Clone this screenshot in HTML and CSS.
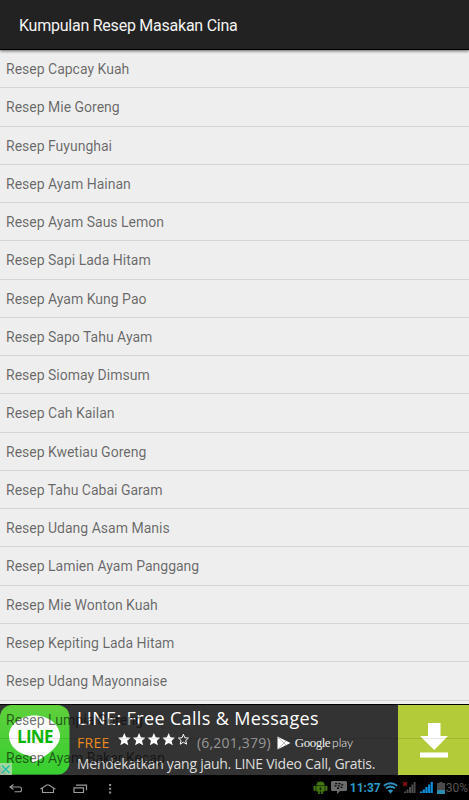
FILE: index.html
```html
<!DOCTYPE html>
<html lang="id">
<head>
  <meta charset="utf-8">
  <title>Kumpulan Resep Masakan Cina</title>
  <link rel="stylesheet" href="styles.css">
</head>
<body>

  <header class="action-bar">
    <h1>Kumpulan Resep Masakan Cina</h1>
  </header>

  <main class="content">
    <ul class="recipes">
      <li>Resep Capcay Kuah</li>
      <li>Resep Mie Goreng</li>
      <li>Resep Fuyunghai</li>
      <li>Resep Ayam Hainan</li>
      <li>Resep Ayam Saus Lemon</li>
      <li>Resep Sapi Lada Hitam</li>
      <li>Resep Ayam Kung Pao</li>
      <li>Resep Sapo Tahu Ayam</li>
      <li>Resep Siomay Dimsum</li>
      <li>Resep Cah Kailan</li>
      <li>Resep Kwetiau Goreng</li>
      <li>Resep Tahu Cabai Garam</li>
      <li>Resep Udang Asam Manis</li>
      <li>Resep Lamien Ayam Panggang</li>
      <li>Resep Mie Wonton Kuah</li>
      <li>Resep Kepiting Lada Hitam</li>
      <li>Resep Udang Mayonnaise</li>
      <li>Resep Lumpia Goreng</li>
      <li>Resep Ayam Bakar Kecap</li>
    </ul>

    <!-- the banner sits under the list, the rows show through on top of it -->
    <div class="ad">
      <div class="ad-icon">
        <svg width="70" height="70" viewBox="0 0 70 70">
          <defs>
            <linearGradient id="green" x1="0" y1="0" x2="0" y2="1">
              <stop offset="0" stop-color="#5fd03c"/>
              <stop offset="1" stop-color="#37cf31"/>
            </linearGradient>
          </defs>
          <rect width="69.500" height="69.500" rx="12" fill="url(#green)"/>
          <path d="M34.500 10.500C20.500 10.500 9 19.500 9 31c0 10 9 18.300 21.500 20 2 .4 1.500 2.500 1.200 5-.2 1.800.8 2.300 2.500 1.400C43 52.500 60 43 60 31c0-11.500-11.500-20.500-25.500-20.500z" fill="#fff"/>
        </svg>
        <span class="ad-logo">LINE</span>
        <svg class="ad-close" width="12" height="12" viewBox="0 0 12 12">
          <rect width="12" height="12" fill="#b9dcb5" fill-opacity=".8"/>
          <path d="M2 2.500l7.500 7.500M9.500 2.500L2 10" stroke="#20b8b0" stroke-width="1.300"/>
        </svg>
      </div>
      <div class="ad-text">
        <div class="ad-title">LINE: Free Calls &amp; Messages</div>
        <div class="ad-rating">
          <span class="free">FREE</span>
          <svg class="stars" width="72" height="14" viewBox="0 0 72 14">
            <defs>
              <path id="star" d="M6 0l1.800 4.300 4.500.4-3.400 3 1.100 4.600L6 9.900l-4 2.400 1.100-4.600-3.400-3 4.500-.4z"/>
            </defs>
            <g fill="#fff">
              <use href="#star" x=".3"/>
              <use href="#star" x="15.100"/>
              <use href="#star" x="29.900"/>
              <use href="#star" x="44.700"/>
            </g>
            <path transform="translate(59.400 0)" d="M6 1.300l1.400 3.500 3.600.3-2.700 2.400.9 3.700L6 9.200l-3.200 2 .9-3.700L1 5.100l3.600-.3z" fill="none" stroke="#fff" stroke-width="1"/>
          </svg>
          <span class="count">(6,201,379)</span>
          <svg class="play" width="14" height="14" viewBox="0 0 14 14">
            <path d="M.5.500L13.500 7 .5 13.500z" fill="#fff"/>
            <path d="M1 1l8.500 8.500M1 13l8.500-8.500" stroke="#999" stroke-width=".6"/>
          </svg>
          <span class="google">Google</span>
          <span class="play-word">play</span>
        </div>
        <div class="ad-desc">Mendekatkan yang jauh. LINE Video Call, Gratis.</div>
      </div>
      <div class="ad-download">
        <svg width="28" height="35" viewBox="0 0 28 35">
          <path d="M8 0h12.500v13H28L14.200 27 0 13h8z" fill="#fff"/>
          <rect y="29.500" width="28" height="5" fill="#fff"/>
        </svg>
      </div>
    </div>
  </main>

  <footer class="system-bar">
    <div class="nav">
      <svg width="14" height="10" viewBox="0 0 14 10">
        <path d="M4.500 0.500L1 3l3.500 2.500M1.500 3h9a2 2 0 0 1 2 2v.8a2 2 0 0 1-2 2H5.500" fill="none" stroke="#9a9a9a" stroke-width="1.100"/>
      </svg>
      <svg width="16" height="10" viewBox="0 0 16 10">
        <path d="M2.500 8.500V4.800H1L6.300 1.200q1.500-.8 3 0L14.800 4.800h-1.300v3.700z" fill="none" stroke="#9a9a9a" stroke-width="1.100"/>
      </svg>
      <svg width="15" height="10" viewBox="0 0 15 10">
        <path d="M1 3.800h9.500v4.700H1zM3 1.200h10.500v5" fill="none" stroke="#9a9a9a" stroke-width="1.200"/>
      </svg>
      <svg class="more" width="3" height="10" viewBox="0 0 3 10">
        <path d="M0 0h2.200v2H0zM0 3.700h2.200v2H0zM0 7.400h2.200v2H0z" fill="#8a8a8a"/>
      </svg>
    </div>
    <div class="status">
      <svg width="16" height="13" viewBox="0 0 16 13">
        <path d="M3.500 4.300a4 3.500 0 0 1 8 0zM3.500 5h8v5.200h-1.700V13H8.300v-2.500H6.700V13H5.200v-2.800H3.500zM.8 5h1.800v4.500H.8zM12.400 5h1.800v4.500h-1.800zM4.300.2l1.300 1.600M10.700.2L9.400 1.800" fill="#447613" stroke="#447613" stroke-width=".4"/>
        <path d="M8.200 5.200L6 8.200h1.500l-.8 2.300L9 7.500H7.600z" fill="#0c1605"/>
      </svg>
      <svg class="bbm" width="16" height="13" viewBox="0 0 16 13">
        <path d="M1.500 0h13Q16 0 16 1.500v7q0 1.500-1.500 1.500H9l-3 3v-3H1.500Q0 10 0 8.500v-7Q0 0 1.500 0z" fill="#6c6c6c"/>
        <path d="M4.200 2h2v1.300h-2zM7.500 2h2v1.300h-2zM3.500 4.300h2v1.300h-2zM6.800 4.300h2v1.300h-2zM10.200 3.300h2v1.300h-2zM6 6.600h2v1.300H6zM9.500 5.800h2v1.300h-2z" fill="#080808"/>
      </svg>
      <span class="clock">11:37</span>
      <svg class="wifi" width="15" height="12" viewBox="0 0 15 12">
        <path d="M.8 3.700q6.700-5 13.400 0M3 6.300q4.500-3.400 9 0" fill="none" stroke="#2c92bd" stroke-width="2"/>
        <path d="M4.800 8.500q2.700-2 5.400 0L7.500 11.500z" fill="#2c92bd"/>
      </svg>
      <svg class="signal" width="14" height="13" viewBox="0 0 14 13">
        <path d="M2 10.500h2V12H2zM4.500 8.500h2V12h-2zM7 6h2v6H7zM9.400 3.500h1.900V12H9.400zM11.700 1h1.800v11h-1.800z" fill="#4d4d4d"/>
        <path d="M1 1l4 4M5 1L1 5" stroke="#a01010" stroke-width="1.200"/>
      </svg>
      <svg class="signal" width="14" height="13" viewBox="0 0 14 13">
        <path d="M0 10.500h2.200V12H0zM2.700 8.500h2.200V12H2.700zM5.400 6h2.200v6H5.400zM8.100 3.500h2.100V12H8.100zM10.700 1h2.100v11h-2.100z" fill="#0a91dd"/>
      </svg>
      <svg class="battery" width="8" height="12" viewBox="0 0 8 12">
        <path d="M2.500 0h3v1H8v7H0V1h2.500z" fill="#4a4a4a"/>
        <path d="M0 8h8v4H0z" fill="#2d8ab0"/>
      </svg>
      <span class="percent">30%</span>
    </div>
  </footer>

</body>
</html>
```
FILE: styles.css
```css
html {height: 100%;}

body {
margin: 0;
padding: 0;
height: 800px;
display: flex;
flex-direction: column;
overflow: hidden;
background: #eee;
font-family: Roboto, sans-serif;
}

.action-bar {
height: 50px;
flex: none;
display: flex;
align-items: center;
padding: 2px 19px 0;
box-sizing: border-box;
background: #222;
border-bottom: 1px solid #000;
box-shadow: 0 1px 3px rgba(0,0,0,0.6);
z-index: 2;
}

.action-bar h1 {
margin: 0;
color: #f3f3f3;
font-size: 16px;
font-weight: normal;
letter-spacing: -0.24px;
white-space: nowrap;
}

.content {
position: relative;
flex: 1;
overflow: hidden;
}

.recipes {
position: relative;
z-index: 1;
list-style: none;
margin: 0;
padding: 0;
}

.recipes li {
height: 38.280px;
line-height: 39.500px;
padding-left: 6px;
box-sizing: border-box;
border-bottom: 1px solid rgba(0,0,0,0.1);
color: rgba(0,0,0,0.58);
font-size: 14px;
white-space: nowrap;
}

/* banner */
.ad {
position: absolute;
left: 0;
right: 0;
bottom: 0;
height: 70px;
display: flex;
background: #333;
box-shadow: 0 -1px 0 #000;
}

.ad-icon {
position: relative;
width: 70px;
flex: none;
}

.ad-logo {
position: absolute;
left: 17px;
top: 22px;
color: #0cb50c;
font: bold 17px/20px "Open Sans", sans-serif;
letter-spacing: -0.7px;
}

.ad-close {
position: absolute;
left: 0;
bottom: 0;
}

.ad-text {
flex: 1;
min-width: 0;
padding-left: 7px;
font-family: "Open Sans", sans-serif;
white-space: nowrap;
}

.ad-title {
height: 27px;
line-height: 27px;
color: #fff;
font-size: 18px;
letter-spacing: 0.36px;
}

.ad-rating {
display: flex;
align-items: center;
height: 21px;
font-size: 14px;
}

.free {
width: 41px;
color: #f08c1e;
letter-spacing: 0.3px;
}

.stars {margin-top: -5px;}

.count {
margin-left: 7px;
color: #999;
letter-spacing: 0.2px;
}

.play {margin-left: 6px;}

.google {
margin-left: 4px;
margin-top: 1px;
color: #eee;
font: 13px "Liberation Serif", serif;
letter-spacing: -0.5px;
}

.play-word {
margin-left: 2px;
color: #eee;
font: 300 12px Lato, sans-serif;
}

.ad-desc {
height: 22px;
line-height: 22px;
color: #ddd;
font-size: 14px;
letter-spacing: -0.26px;
}

.ad-download {
width: 71px;
flex: none;
display: flex;
align-items: center;
justify-content: center;
background: #b3cb38;
}

/* android bar */
.system-bar {
height: 25px;
flex: none;
display: flex;
justify-content: space-between;
align-items: center;
background: #000;
}

.nav {
display: flex;
align-items: center;
gap: 17px;
padding: 2px 0 0 9px;
}

.more {margin-left: 4px;}

.status {
display: flex;
align-items: center;
padding-right: 1px;
}

.bbm {margin-left: 2px;}

.clock {
margin-left: 3px;
color: #2c9cc9;
font-size: 12px;
font-weight: bold;
}

.wifi {margin-left: 2px;}

.signal {margin-left: 4px;}

.battery {margin-left: 3px;}

.percent {
margin-left: 1px;
color: #555;
font-size: 12px;
}
```
